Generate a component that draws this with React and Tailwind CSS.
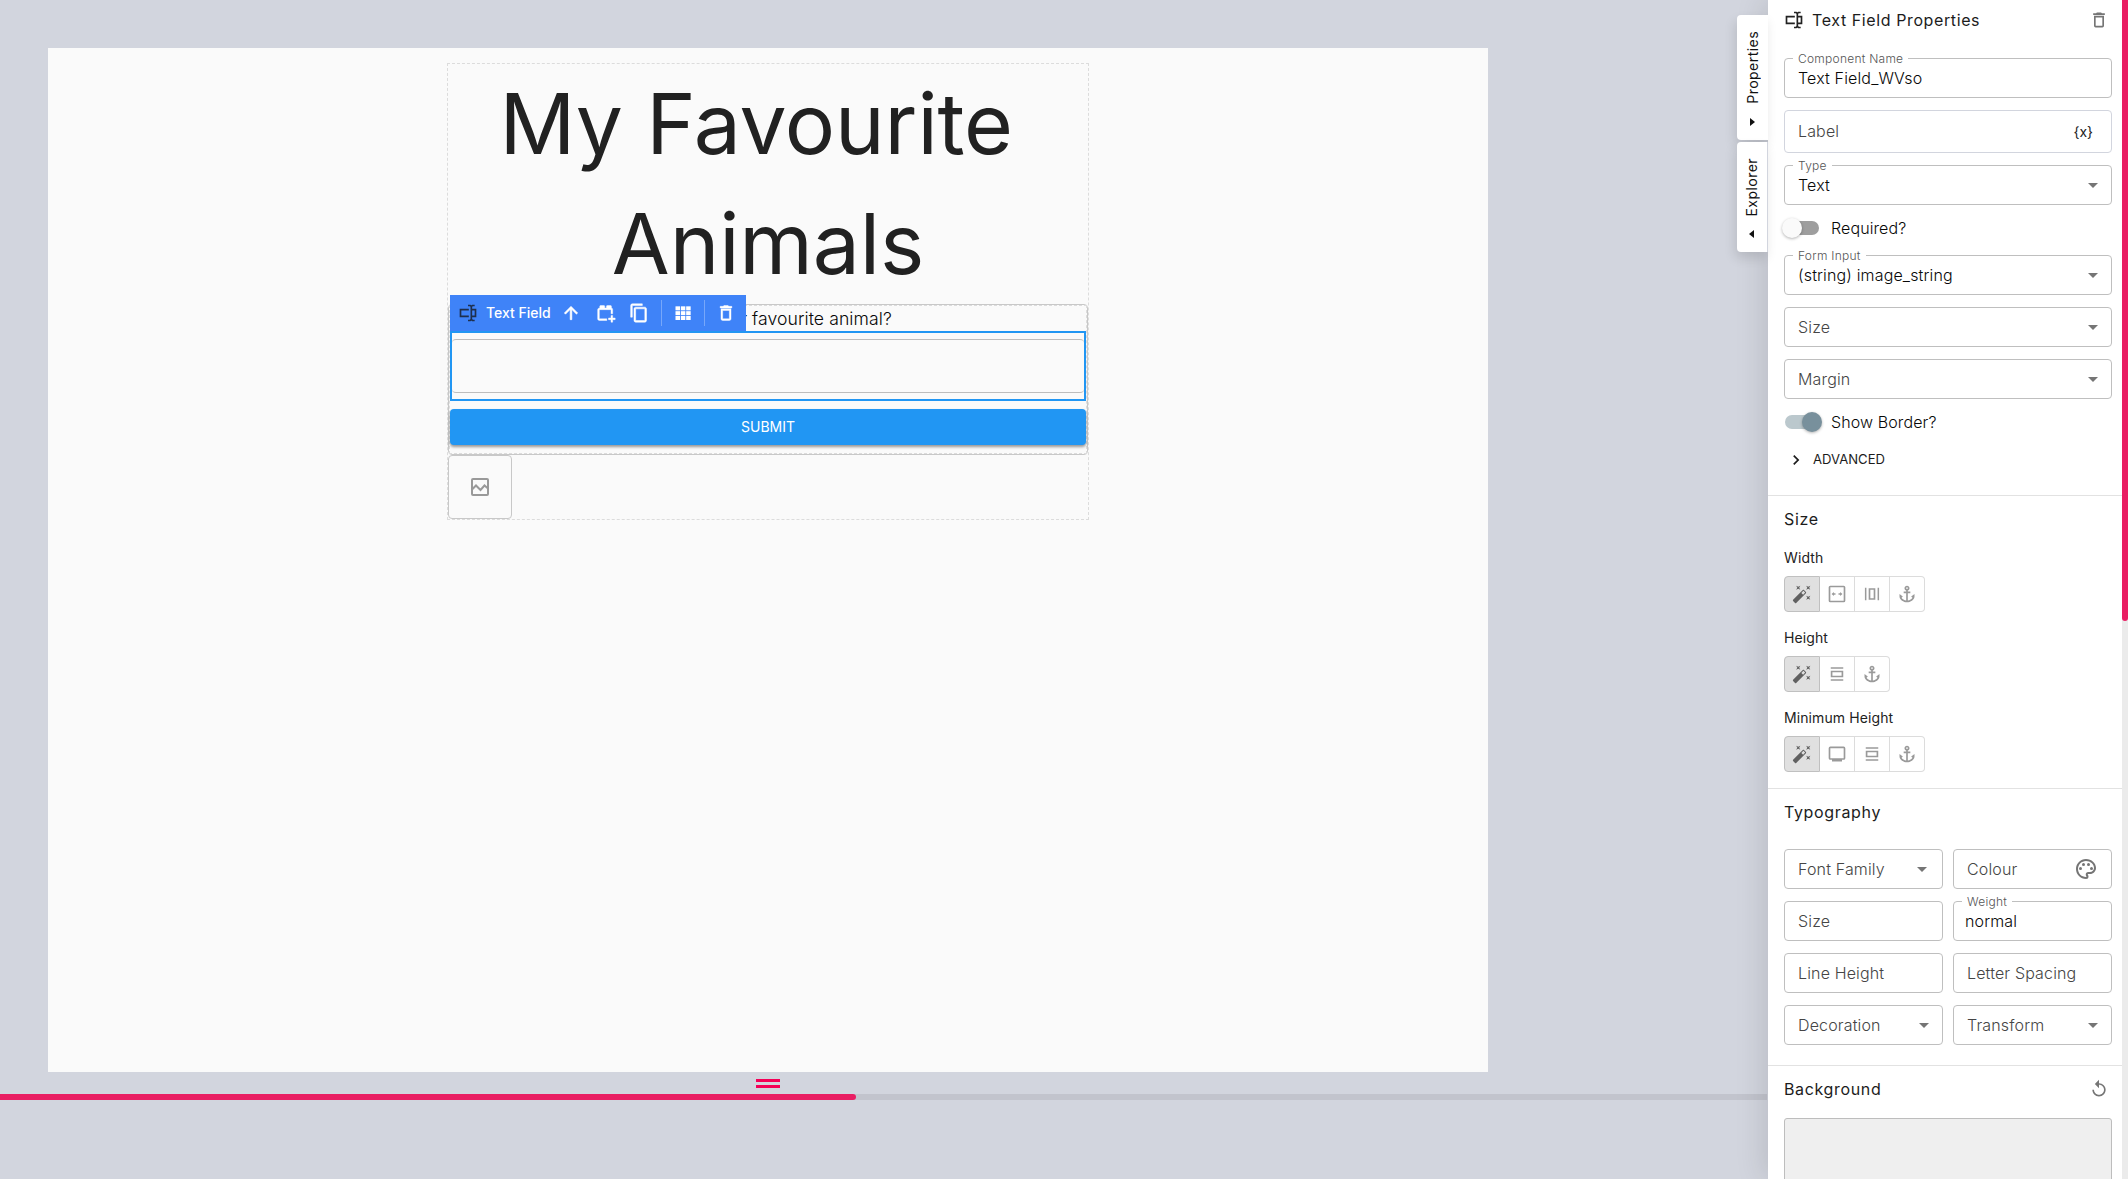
import React from "react";
import {
  MdArrowDropDown, MdAnchor, MdOutlinePalette, MdReplay, MdChevronRight,
} from "react-icons/md";

const Svg = ({ size = 20, className = "", children }) => (
  <svg width={size} height={size} viewBox="0 0 24 24" fill="currentColor" className={"shrink-0 " + className}>{children}</svg>
);
const TextboxIcon = (p) => (
  <Svg {...p}><path d="M17,7H22V17H17V19A1,1 0 0,0 18,20H20V22H17.5C16.95,22 16,21.55 16,21C16,21.55 15.05,22 14.5,22H12V20H14A1,1 0 0,0 15,19V5A1,1 0 0,0 14,4H12V2H14.5C15.05,2 16,2.45 16,3C16,2.45 16.95,2 17.5,2H20V4H18A1,1 0 0,0 17,5V7M2,7H13V9H4V15H13V17H2V7M20,15V9H17V15H20Z" /></Svg>
);
const TrashIcon = (p) => (
  <Svg {...p}><path d="M6,19A2,2 0 0,0 8,21H16A2,2 0 0,0 18,19V7H6V19M8,9H16V19H8V9M15.5,4L14.5,3H9.5L8.5,4H5V6H19V4H15.5Z" /></Svg>
);
const ArrowUpIcon = (p) => (
  <Svg {...p}><path d="M4 12l1.410 1.410L11 7.830V20h2V7.830l5.580 5.590L20 12l-8-8-8 8z" /></Svg>
);
const CopyIcon = (p) => (
  <Svg {...p}><path d="M16 1H4c-1.100 0-2 .9-2 2v14h2V3h12V1zm3 4H8c-1.100 0-2 .9-2 2v14c0 1.100.9 2 2 2h11c1.100 0 2-.9 2-2V7c0-1.100-.9-2-2-2zm0 16H8V7h11v14z" /></Svg>
);
const WandIcon = (p) => (
  <Svg {...p}><path d="M7.5,5.6L5,7L6.4,4.5L5,2L7.5,3.4L10,2L8.6,4.5L10,7L7.5,5.6M19.5,15.4L22,14L20.6,16.5L22,19L19.5,17.6L17,19L18.4,16.5L17,14L19.5,15.4M22,2L20.6,4.5L22,7L19.5,5.6L17,7L18.4,4.5L17,2L19.5,3.4L22,2M13.34,12.78L15.78,10.34L13.66,8.22L11.22,10.66L13.34,12.78M14.37,7.29L16.71,9.63C17.1,10 17.1,10.65 16.71,11.04L5.04,22.71C4.65,23.1 4,23.1 3.63,22.71L1.29,20.37C0.9,20 0.9,19.35 1.29,18.96L12.96,7.29C13.35,6.9 14,6.9 14.37,7.29Z" /></Svg>
);
const FillWidthIcon = (p) => (
  <Svg {...p}>
    <rect x="3" y="3" width="18" height="18" rx="1" fill="none" stroke="currentColor" strokeWidth="2" />
    <path d="M5.500 12l2.700-2.500v1.600h2v1.800h-2v1.600zM18.500 12l-2.700-2.500v1.600h-2v1.800h2v1.600z" />
  </Svg>
);
const FitWidthIcon = (p) => (
  <Svg {...p}><path d="M3.500 4.500h1.800v15H3.500zM18.700 4.500h1.800v15h-1.800zM8 5h8v14H8zM10 7v10h4V7z" fillRule="evenodd" /></Svg>
);
const FitHeightIcon = (p) => (
  <Svg {...p}><path d="M4.500 4h15v1.800h-15zM4.500 18.200h15V20h-15zM4.500 8h15v8h-15zM6.500 10v4h11v-4z" fillRule="evenodd" /></Svg>
);
const MonitorIcon = (p) => (
  <Svg {...p}>
    <rect x="3" y="4" width="18" height="14" rx="1" fill="none" stroke="currentColor" strokeWidth="2" />
    <path d="M6 18h12v3H6z" />
  </Svg>
);
const BrickPlusIcon = (p) => (
  <Svg {...p}>
    <path d="M13 19H4V8h14v5h2V8c0-1.100-.5-2-1.500-2V4c0-.6-.4-1-1-1h-4c-.6 0-1 .4-1 1v2h-2V4c0-.6-.4-1-1-1h-4c-.6 0-1 .4-1 1v2C3 6 2 6.900 2 8v11c0 1.100.9 2 2 2h9zM18 15h2v3h3v2h-3v3h-2v-3h-3v-2h3z" stroke="currentColor" strokeWidth="0.5" />
  </Svg>
);
const GridIcon = (p) => (
  <Svg {...p}>
    {[4, 9.800, 15.600].map((y) => [3, 9.400, 15.800].map((x) => <rect key={x + "-" + y} x={x} y={y} width="5.400" height="4.800" />))}
  </Svg>
);
const ImageIcon = (p) => (
  <Svg {...p}>
    <g fill="none" stroke="currentColor" strokeWidth="2">
      <rect x="4" y="4" width="16" height="16" rx="1" />
      <path d="M4 14.500l4-4 4.500 4.500 4-4.500L20 13.500" />
    </g>
  </Svg>
);

function Field({ label, value, caret, children, className = "h-10", caretClass = "mr-[6px]", textClass = "" }) {
  return (
    <div className={"relative flex items-center rounded border pl-[13px] text-base font-light tracking-[0.15px] " + className}>
      {value ? (
        <>
          <span className="absolute -top-[9px] left-2 bg-white px-[5px] text-xs leading-[18px] tracking-[0.25px] text-[#555]">{label}</span>
          <span className={"flex-1 text-[#080808] " + textClass}>{value}</span>
        </>
      ) : (
        <span className={"flex-1 text-[#454545] " + textClass}>{label}</span>
      )}
      {children}
      {caret && <MdArrowDropDown size={24} className={"text-[#757575] " + caretClass} />}
    </div>
  );
}

function Toggle({ on, label, className = "" }) {
  return (
    <div className={"flex h-5 items-center " + className}>
      <span className={"relative ml-px h-[14px] w-[34px] rounded-full " + (on ? "bg-[#bbc8cd]" : "bg-[#9e9e9e]")}>
        <span className={"absolute -top-[3px] size-5 rounded-full shadow-[0_1px_3px_rgba(0,0,0,0.3)] " + (on ? "left-[17px] bg-[#78909c]" : "-left-[3px] bg-[#fafafa]")} />
      </span>
      <span className="ml-3 text-base font-light tracking-[0.1px] text-[#080808]">{label}</span>
    </div>
  );
}

function ButtonGroup({ label, icons, className = "" }) {
  return (
    <div className={className}>
      <div className="h-5 text-sm leading-5 tracking-[0.1px] text-[#222]">{label}</div>
      <div className="mt-2 flex">
        {icons.map((Icon, i) => (
          <div
            key={i}
            className={
              i === 0
                ? "flex size-9 items-center justify-center rounded-l border border-[#c0c0c0] bg-[#e0e0e0] text-[#616161]"
                : "flex h-9 w-[35px] items-center justify-center border-y border-r border-[#dcdcdc] text-[#9a9a9a] last:rounded-r"
            }
          >
            <Icon size={20} />
          </div>
        ))}
      </div>
    </div>
  );
}

function SideTab({ label, open, className = "" }) {
  return (
    <div className={"flex w-[31px] flex-col items-center rounded-l bg-white text-[#111] shadow-[-2px_6px_12px_rgba(0,0,0,0.12)] " + className}>
      <span className="rotate-180 text-sm leading-[30px] tracking-[0.45px] [writing-mode:vertical-rl]">{label}</span>
      <svg width="5" height="8" viewBox="0 0 5 8" className="mt-auto mb-[14px]">
        <path d={open ? "M0 0L5 4L0 8Z" : "M5 0L0 4L5 8Z"} fill="#111" />
      </svg>
    </div>
  );
}

const Heading = ({ children }) => <h2 className="text-base leading-6 tracking-[0.65px] text-[#1c1c1c]">{children}</h2>;

export default function App() {
  return (
    <div className="flex h-[1179px] w-[2128px] overflow-hidden bg-[#d2d5de] font-['Inter',sans-serif]">
      <main className="flex w-[1768px] shrink-0 flex-col">
        <div className="mt-12 ml-12 h-[1024px] w-[1440px] bg-[#fafafa] pt-[15px]">
          <div className="mx-auto h-[457px] w-[642px] border border-dashed border-[#dcdcdc]">
            <h1 className="h-[240px] text-center text-[84px] leading-[120px] font-normal tracking-[-0.15px] text-[#212121]">
              My Favourite&nbsp;<br />Animals
            </h1>
            <div className="relative h-[151px] rounded border border-[#c8c8c8]">
              <div className="h-full border border-dashed border-[#dcdcdc]">
                <p className="h-[25px] text-center text-[17.6px] leading-[25px] font-light tracking-[0.08px] text-[#080808]">What is your favourite animal?</p>
                <div className="h-[70px] border-2 border-[#2196f3] pt-[6px]">
                  <div className="h-[54px] rounded-sm border-y border-[#bdbdbd]" />
                </div>
                <button className="mt-2 flex h-9 w-full items-center justify-center rounded bg-[#2196f3] text-sm text-white shadow-[0_2px_3px_rgba(0,0,0,0.4)]">SUBMIT</button>
              </div>
              <div className="absolute -top-[10px] left-px flex h-9 w-[296px] items-center bg-[#3f83f8] text-white">
                <TextboxIcon className="ml-2 text-[#1e2f4d]" />
                <span className="ml-2 w-[65px] text-sm font-medium">Text Field</span>
                <ArrowUpIcon className="ml-[10px] stroke-current stroke-[0.7]" />
                <BrickPlusIcon className="ml-[15px]" />
                <CopyIcon className="ml-[13px] stroke-current stroke-[0.6]" />
                <span className="ml-[12px] h-[26px] w-px bg-[#77a7fa]" />
                <GridIcon className="ml-[11px]" />
                <span className="ml-[11px] h-[26px] w-px bg-[#77a7fa]" />
                <TrashIcon className="ml-[11px] stroke-current stroke-[0.5]" />
              </div>
            </div>
            <div className="flex size-16 items-center justify-center rounded border border-[#c8c8c8] text-[#999]">
              <ImageIcon size={24} />
            </div>
          </div>
        </div>
        <div className="flex h-[22px] w-[1536px] flex-col items-center gap-[3px] pt-[7px]">
          <div className="h-[3px] w-6 bg-[#f50057]" />
          <div className="h-[3px] w-6 bg-[#f50057]" />
        </div>
        <div className="h-[6px] w-[1767px] bg-[#c2c4cd]">
          <div className="h-full w-[856px] rounded-r-full bg-[#e91e63]" />
        </div>
      </main>

      <aside className="relative flex w-[360px] shrink-0 bg-white shadow-[-4px_0_28px_rgba(0,0,0,0.12)]">
        <div className="absolute top-[15px] -left-[31px] flex flex-col gap-[2px]">
          <SideTab label="Properties" open className="h-[125px] pt-[16px]" />
          <SideTab label="Explorer" className="h-[110px] border-r border-[#d2d5de] pt-[16px] pr-px" />
        </div>
        <div className="h-[1179px] w-[354px] overflow-hidden">
          <section className="flex h-[495px] flex-col pr-[10px] pl-4">
            <div className="flex h-10 items-center pr-[3px]">
              <TextboxIcon className="text-[#222]" />
              <h2 className="ml-2 flex-1 text-base tracking-[0.6px] text-[#1c1c1c]">Text Field Properties</h2>
              <TrashIcon className="text-[#757575]" />
            </div>
            <Field label="Component Name" value="Text Field_WVso" className="mt-[18px] h-10 border-[#bfbfbf]" />
            <Field label="Label" className="mt-3 h-[43px] border-[#d2d5de]" textClass="pb-[2px]">
              <span className="mr-[18px] text-sm font-normal tracking-normal text-[#222]">{"{x}"}</span>
            </Field>
            <Field label="Type" value="Text" caret className="mt-3 h-10 border-[#bfbfbf]" />
            <Toggle label="Required?" className="mt-[13px]" />
            <Field label="Form Input" value="(string) image_string" caret className="mt-[17px] h-10 border-[#bfbfbf]" />
            <Field label="Size" caret className="mt-3 h-10 border-[#bfbfbf]" />
            <Field label="Margin" caret className="mt-3 h-10 border-[#bfbfbf]" />
            <Toggle on label="Show Border?" className="mt-[13px]" />
            <div className="mt-[18px] flex h-5 items-center text-[13.1px] text-[#1c1c1c]">
              <MdChevronRight size={20} className="ml-[2px]" />
              <span className="ml-[7px]">ADVANCED</span>
            </div>
          </section>
          <section className="h-[293px] border-t border-[#e2e2e2] pt-[11px] pl-4">
            <Heading>Size</Heading>
            <ButtonGroup className="mt-[17px]" label="Width" icons={[WandIcon, FillWidthIcon, FitWidthIcon, MdAnchor]} />
            <ButtonGroup className="mt-4" label="Height" icons={[WandIcon, FitHeightIcon, MdAnchor]} />
            <ButtonGroup className="mt-4" label="Minimum Height" icons={[WandIcon, MonitorIcon, FitHeightIcon, MdAnchor]} />
          </section>
          <section className="h-[277px] border-t border-[#e2e2e2] pt-[11px] pr-[10px] pl-4">
            <Heading>Typography</Heading>
            <div className="mt-[25px] grid grid-cols-2 gap-x-[10px] gap-y-3">
              <Field label="Font Family" caret caretClass="mr-2" className="h-10 border-[#bfbfbf]" />
              <Field label="Colour" className="h-10 border-[#bfbfbf]"><MdOutlinePalette size={24} className="mr-[13px] text-[#757575]" /></Field>
              <Field label="Size" className="h-10 border-[#bfbfbf]" />
              <Field label="Weight" value="normal" textClass="-ml-[2px]" className="h-10 border-[#bfbfbf]" />
              <Field label="Line Height" className="h-10 border-[#bfbfbf]" />
              <Field label="Letter Spacing" className="h-10 border-[#bfbfbf]" />
              <Field label="Decoration" caret className="h-10 border-[#bfbfbf]" />
              <Field label="Transform" caret className="h-10 border-[#bfbfbf]" />
            </div>
          </section>
          <section className="border-t border-[#e2e2e2] pt-[11px] pr-[10px] pl-4">
            <div className="flex items-center justify-between pr-[3px]">
              <Heading>Background</Heading>
              <MdReplay size={20} className="text-[#757575]" />
            </div>
            <div className="mt-[17px] h-[160px] rounded-t-[3px] border border-[#bdbdbd] bg-[#efefef]" />
          </section>
        </div>
        <div className="h-[1179px] w-[6px] bg-[#ebebeb]">
          <div className="h-[621px] rounded-b-full bg-[#e91e63]" />
        </div>
      </aside>
    </div>
  );
}
